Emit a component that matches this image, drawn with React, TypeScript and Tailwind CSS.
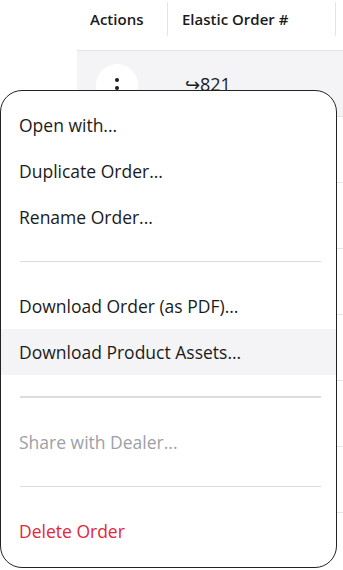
const rows = [
  { id: 821, active: true },
  { id: 820, active: false },
  { id: 819, active: false },
  { id: 818, active: false },
  { id: 817, active: false },
  { id: 816, active: false },
  { id: 815, active: false },
];

type MenuItem =
  | { kind: "item"; label: string; tone?: "normal" | "muted" | "danger"; hover?: boolean }
  | { kind: "divider"; thick?: boolean };

const menu: MenuItem[] = [
  { kind: "item", label: "Open with..." },
  { kind: "item", label: "Duplicate Order..." },
  { kind: "item", label: "Rename Order..." },
  { kind: "divider" },
  { kind: "item", label: "Download Order (as PDF)..." },
  { kind: "item", label: "Download Product Assets...", hover: true },
  { kind: "divider", thick: true },
  { kind: "item", label: "Share with Dealer...", tone: "muted" },
  { kind: "divider" },
  { kind: "item", label: "Delete Order", tone: "danger" },
];

export default function App() {
  return (
    <div className="relative w-[343px] h-[570px] overflow-hidden bg-white font-['Open_Sans',sans-serif] text-[#1b1b1b]">
      {/* Table behind */}
      <div className="ml-[77px]">
        <div className="flex h-[51px] border-b border-[#e4e4e7] text-[15px] font-semibold">
          <div className="w-[91px] pl-[13px] pt-[6px] border-r border-[#e4e4e7] h-[34px] mt-[2px]">Actions</div>
          <div className="w-[168px] pl-[14px] pt-[6px] border-r border-[#e4e4e7] h-[34px] mt-[2px]">Elastic Order #</div>
        </div>
        {rows.map((r) => (
          <div
            key={r.id}
            className={`flex items-start h-[66px] border-b border-[#e4e4e7] ${r.active ? "bg-[#f4f4f6]" : "bg-white"}`}
          >
            {/* only the first row peeks out above the menu */}
            {r.active && (
              <>
                <div className="w-[91px] flex pl-[19px] pt-[13px]">
                  <div className="w-[42px] h-[44px] rounded-full bg-white flex flex-col items-center gap-[4px] pt-[14px]">
                    <span className="w-[4px] h-[4px] rounded-full bg-[#1b1b1b]" />
                    <span className="w-[4px] h-[4px] rounded-full bg-[#1b1b1b]" />
                    <span className="w-[4px] h-[4px] rounded-full bg-[#1b1b1b]" />
                  </div>
                </div>
                <div className="pl-[17px] pt-[21px] text-[18px] leading-[24px]">↪{r.id}</div>
              </>
            )}
          </div>
        ))}
      </div>

      {/* Context menu */}
      <div className="absolute left-0 top-[90px] w-[337px] h-[478px] bg-white border-[1.5px] border-[#222] rounded-[22px] py-[11px] text-[17.5px]">
        {menu.map((m, i) =>
          m.kind === "divider" ? (
            <div key={i} className="py-[21px] pl-[19px] pr-[15px]">
              <div className={`${m.thick ? "h-[2px]" : "h-px"} bg-[#dcdcdc]`} />
            </div>
          ) : (
            <div
              key={i}
              className={`h-[46px] flex items-center px-[18px] whitespace-nowrap ${m.hover ? "bg-[#f4f4f6]" : ""} ${
                m.tone === "muted" ? "text-[#9ca0a6]" : m.tone === "danger" ? "text-[#e3263c]" : ""
              }`}
            >
              {m.label}
            </div>
          )
        )}
      </div>
    </div>
  );
}
